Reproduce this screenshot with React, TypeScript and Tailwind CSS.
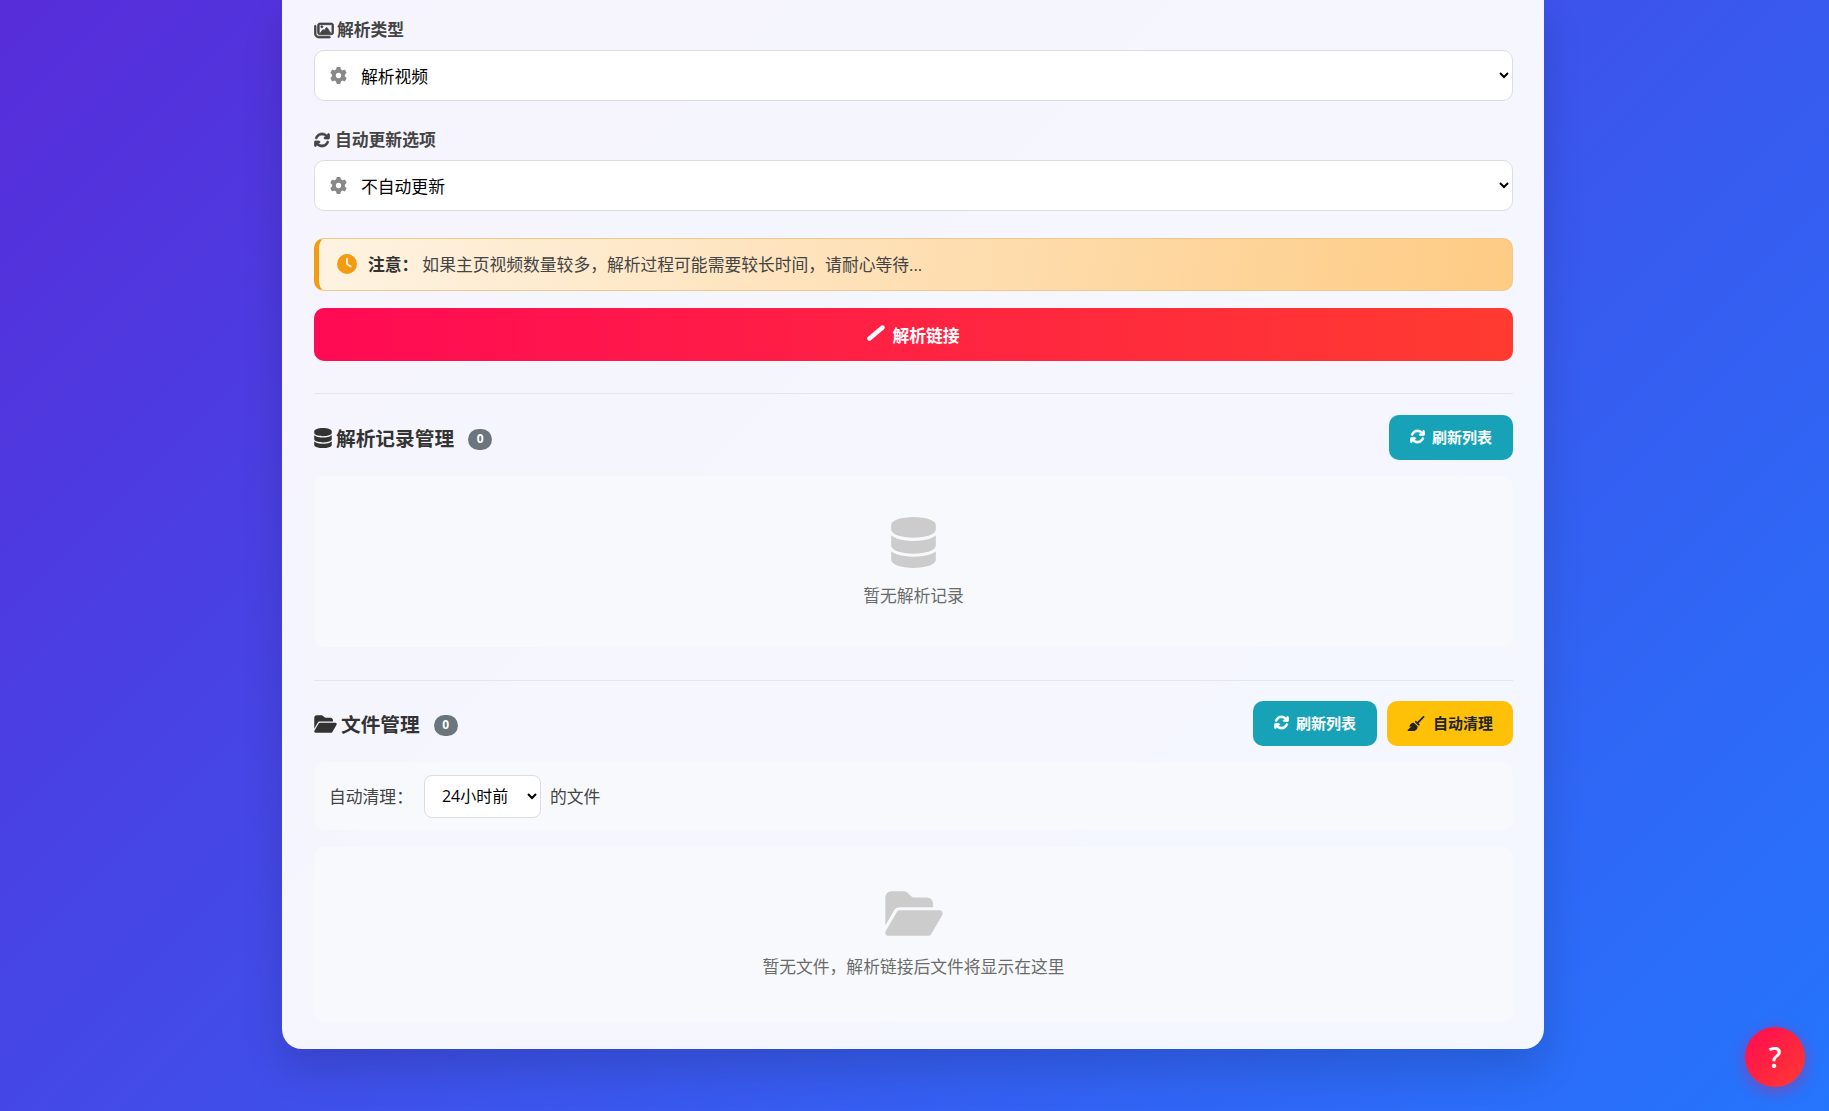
import React from 'react';
import { FaArrowsRotate, FaBroom, FaClock, FaDatabase, FaFolderOpen, FaGear, FaRegImages } from 'react-icons/fa6';

function FieldSelect({ options }: { options: string[] }) {
  return (
    <div className="relative">
      <FaGear className="absolute left-[16px] top-[17px] w-[17px] h-[17px] text-[#888888]" />
      <select className="block w-full h-[51px] pl-[42px] pr-[4px] pt-[2px] bg-white border border-[#dcdde3] rounded-[10px] text-[16.8px] text-black">
        {options.map((o) => (
          <option key={o}>{o}</option>
        ))}
      </select>
    </div>
  );
}

function Badge() {
  return (
    <span className="ml-[14px] mt-[2px] w-[24px] h-[21px] rounded-full bg-[#6c757d] text-white text-[12px] font-bold flex items-center justify-center">
      0
    </span>
  );
}

function EmptyBox({ icon, text, height }: { icon: React.ReactNode; text: string; height: string }) {
  return (
    <div className={`${height} rounded-[10px] bg-[#f8f9fd] flex flex-col items-center pt-[41px]`}>
      {icon}
      <p className="mt-[16px] text-[16.8px] leading-[24px] text-[#6b6b6b]">{text}</p>
    </div>
  );
}

export default function App() {
  return (
    <div className="relative h-screen overflow-hidden bg-[linear-gradient(135deg,#572cd9_0%,#2575fc_100%)] font-['Open_Sans','Noto_Sans_CJK_SC',sans-serif]">
      <div className="ml-[282px] w-[1262px] bg-white/95 rounded-b-[20px] pl-[32px] pr-[31px] pt-[18px] pb-[27px] shadow-[0_20px_40px_rgba(0,0,0,0.14)]">
        {/* parse options */}
        <label className="flex items-center gap-[3px] h-[24px] mb-[8px] text-[16.8px] font-bold text-[#444444]">
          <FaRegImages className="w-[20px] h-[17px]" stroke="currentColor" strokeWidth={24} /> 解析类型
        </label>
        <FieldSelect options={['解析视频', '解析图片']} />

        <label className="flex items-center gap-[5px] h-[24px] mt-[27px] mb-[8px] text-[16.8px] font-bold text-[#444444]">
          <FaArrowsRotate className="w-[16px] h-[16px]" stroke="currentColor" strokeWidth={24} /> 自动更新选项
        </label>
        <FieldSelect options={['不自动更新', '每天更新']} />

        <div className="mt-[27px] h-[53px] flex items-center pl-[18px] rounded-[10px] border border-[#f0c98a] border-l-[5px] border-l-[#f39c12] bg-[linear-gradient(100deg,#fef3e2_0%,#fecb84_100%)] text-[16.8px] text-[#444444]">
          <FaClock className="w-[20px] h-[20px] text-[#f39c12] mb-[2px]" />
          <strong className="ml-[11px] text-[#333333] font-bold">{'注意\uFF1A'}</strong>
          <span className="ml-[4px]">{'如果主页视频数量较多\uFF0C解析过程可能需要较长时间\uFF0C请耐心等待...'}</span>
        </div>

        <button className="mt-[17px] w-full h-[53px] pt-[2px] rounded-[10px] bg-[linear-gradient(90deg,#ff0a54_0%,#ff3b30_100%)] text-white text-[16.8px] font-bold flex items-center justify-center gap-[7px]">
          <svg viewBox="0 0 18 16" className="w-[18px] h-[16px] mb-[5px]" fill="none" stroke="currentColor" strokeWidth="4.4" strokeLinecap="round">
            <path d="M2.5 13.5 15.5 2.5" />
          </svg>
          解析链接
        </button>

        <hr className="mt-[32px] border-0 border-t border-[#e4e6ee]" />

        {/* parse records */}
        <div className="mt-[21px] h-[45px] flex items-center justify-between">
          <div className="flex items-center pt-[2px] text-[19.7px] font-bold text-[#333333]">
            <FaDatabase className="w-[18px] h-[20px] mr-[4px]" /> 解析记录管理
            <Badge />
          </div>
          <button className="w-[124px] h-[45px] rounded-[10px] bg-[#17a2b8] text-white text-[15px] font-bold flex items-center justify-center gap-[7px]">
            <FaArrowsRotate className="w-[15px] h-[15px] mb-[2px]" stroke="currentColor" strokeWidth={24} /> 刷新列表
          </button>
        </div>
        <div className="mt-[16px]">
          <EmptyBox
            height="h-[171px]"
            text="暂无解析记录"
            icon={<FaDatabase className="w-[45px] h-[51px] text-[#cccccc]" />}
          />
        </div>

        <hr className="mt-[33px] border-0 border-t border-[#e4e6ee]" />

        {/* file management */}
        <div className="mt-[20px] h-[45px] flex items-center justify-between">
          <div className="flex items-center pt-[2px] text-[19.7px] font-bold text-[#333333]">
            <FaFolderOpen className="w-[23px] h-[20px] mr-[4px]" /> 文件管理
            <Badge />
          </div>
          <div className="flex gap-[10px]">
            <button className="w-[124px] h-[45px] rounded-[10px] bg-[#17a2b8] text-white text-[15px] font-bold flex items-center justify-center gap-[7px]">
              <FaArrowsRotate className="w-[15px] h-[15px] mb-[2px]" stroke="currentColor" strokeWidth={24} /> 刷新列表
            </button>
            <button className="w-[126px] h-[45px] rounded-[10px] bg-[#ffc107] text-[#212529] text-[15px] font-bold flex items-center justify-center gap-[8px]">
              <FaBroom className="w-[18px] h-[15px]" /> 自动清理
            </button>
          </div>
        </div>

        <div className="mt-[16px] h-[68px] rounded-[10px] bg-[#f8f9fd] flex items-center pl-[15px] text-[16.8px] text-[#444444]">
          <span className="mt-[2px]">{'自动清理\uFF1A'}</span>
          <select className="ml-[11px] w-[117px] h-[43px] pl-[13px] bg-white border border-[#dcdde3] rounded-[8px] text-[16px] text-black">
            <option>24小时前</option>
            <option>12小时前</option>
          </select>
          <span className="ml-[9px] mt-[2px]">的文件</span>
        </div>

        <div className="mt-[17px]">
          <EmptyBox
            height="h-[175px]"
            text={'暂无文件\uFF0C解析链接后文件将显示在这里'}
            icon={<FaFolderOpen className="w-[58px] h-[51px] text-[#cccccc]" />}
          />
        </div>
      </div>

      <button className="absolute right-[24px] bottom-[24px] w-[60px] h-[60px] rounded-full bg-[linear-gradient(135deg,#ff0a54_0%,#ff3b30_100%)] shadow-[0_4px_15px_rgba(255,10,84,0.4)] text-white text-[28px] font-semibold flex items-center justify-center">
        ?
      </button>
    </div>
  );
}
